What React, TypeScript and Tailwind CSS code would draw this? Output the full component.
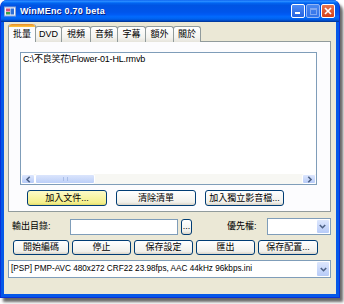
import React from "react";

const font = "font-['Liberation_Sans','Noto_Sans_CJK_TC',sans-serif]";

const Btn = ({ w, h = "h-[16px]", yellow, children }: { w: string; h?: string; yellow?: boolean; children: React.ReactNode }) => (
  <div
    className={`${w} ${h} shrink-0 rounded-[3px] border border-[#003c74] flex items-center justify-center text-[9px] text-black leading-none ${
      yellow
        ? "bg-[linear-gradient(#fcfbc8,#f4ef8a_85%,#e0d96c)]"
        : "bg-[linear-gradient(#ffffff,#f1f0eb_80%,#d9d3c7)]"
    }`}
  >
    {children}
  </div>
);

const Arrow = ({ dir = "down" }: { dir?: "down" | "left" | "right" }) => (
  <div className="w-[14px] h-full shrink-0 border border-white rounded-[2px] bg-[linear-gradient(#dde7fd,#b7cbf8)] flex items-center justify-center">
    <svg width="7" height="7" viewBox="0 0 7 7">
      {dir === "down" && <path d="M0.8 2 L3.5 4.7 L6.2 2" stroke="#4d6185" strokeWidth="1.6" fill="none" />}
      {dir === "left" && <path d="M4.7 0.8 L2 3.5 L4.7 6.2" stroke="#4d6185" strokeWidth="1.6" fill="none" />}
      {dir === "right" && <path d="M2.3 0.8 L5 3.5 L2.3 6.2" stroke="#4d6185" strokeWidth="1.6" fill="none" />}
    </svg>
  </div>
);

const tabs = [
  { label: "DVD", w: "w-[27px]" },
  { label: "視頻", w: "w-[30px]" },
  { label: "音頻", w: "w-[28px]" },
  { label: "字幕", w: "w-[29px]" },
  { label: "額外", w: "w-[29px]" },
  { label: "關於", w: "w-[28px]" },
];

const App = () => {
  return (
    <div className={`w-[344px] h-[304px] bg-white ${font}`}>
      <div className="w-[340px] h-[298px] flex flex-col rounded-t-[7px] bg-[#0558e8] border-x border-b border-[#0831d9] shadow-[3px_4px_3px_rgba(0,0,0,0.6)] overflow-hidden">
        {/* title bar */}
        <div className="h-[22px] shrink-0 flex items-center pl-[3px] pr-[4px] bg-[linear-gradient(#0058ee_0%,#3593ff_5%,#127dff_9%,#0262ee_15%,#0054e3_25%,#0055eb_55%,#005bf5_66%,#026afe_76%,#0062ef_86%,#0052d6_92%,#0040ab_96%,#003092_100%)]">
          <svg width="12" height="11" viewBox="0 0 12 11" className="shrink-0">
            <rect x="0.5" y="1" width="11" height="9" fill="#f4f6fb" stroke="#8aa4d6" />
            <rect x="2" y="2.5" width="4" height="3" fill="#d8507a" />
            <rect x="6.5" y="2.5" width="3.5" height="6" fill="#2e6fd8" />
            <rect x="2" y="6" width="4" height="2.5" fill="#3aa04a" />
          </svg>
          <span className="ml-[4px] text-[9px] font-bold text-white leading-none tracking-[0.2px] [text-shadow:1px_1px_0_#0a1e78]">
            WinMEnc 0.70 beta
          </span>
          <div className="ml-auto flex gap-[1px]">
            <div className="w-[14px] h-[14px] rounded-[2px] border border-white bg-[linear-gradient(#4c8bf5,#2663e0)] flex items-end pl-[3px] pb-[3px]">
              <div className="w-[5px] h-[2px] bg-white" />
            </div>
            <div className="w-[14px] h-[14px] rounded-[2px] border border-[#b7cdf8] bg-[linear-gradient(#5b95f3,#3f78e6)] flex items-center justify-center opacity-80">
              <div className="w-[7px] h-[7px] border border-[#9fbcf3] border-t-2" />
            </div>
            <div className="w-[14px] h-[14px] rounded-[2px] border border-white bg-[linear-gradient(#e9754f,#d2401c)] flex items-center justify-center">
              <svg width="8" height="8" viewBox="0 0 8 8">
                <path d="M1 1 L7 7 M7 1 L1 7" stroke="white" strokeWidth="1.7" />
              </svg>
            </div>
          </div>
        </div>

        {/* body */}
        <div className="flex-1 mx-[3px] mb-[3px] bg-[#ebe8d6] flex flex-col px-[4px] pt-[2px]">
          {/* tabs */}
          <div className="h-[18px] flex items-end relative z-10 -mb-[1px]">
            <div className="w-[28px] h-[18px] bg-[#fcfcfe] border-x border-[#919b9c] rounded-t-[3px] flex flex-col">
              <div className="h-[3px] rounded-t-[3px] bg-[linear-gradient(#e68b2c,#ffc73c)]" />
              <div className="flex-1 flex items-center justify-center text-[9px] leading-none">批量</div>
            </div>
            {tabs.map((t) => (
              <div
                key={t.label}
                className={`${t.w} h-[16px] -ml-[1px] first:ml-0 border border-b-0 border-[#919b9c] rounded-t-[3px] bg-[linear-gradient(#ffffff,#f3f3ef_70%,#e6e4dc)] flex items-center justify-center text-[9px] leading-none`}
              >
                {t.label}
              </div>
            ))}
          </div>

          {/* panel */}
          <div className="h-[171px] w-[323px] border border-[#919b9c] bg-[#fcfcfe] flex flex-col pl-[11px] pt-[10px]">
            <div className="w-[297px] h-[133px] border border-[#7f9db9] bg-white flex flex-col">
              <div className="flex-1 pl-[2px] pt-[1px] text-[9px] leading-[11px] tracking-[-0.2px]">C:\不良笑花\Flower-01-HL.rmvb</div>
              <div className="h-[10px] flex bg-[#f7f7f3] p-0">
                <Arrow dir="left" />
                <div className="w-[60px] h-full border border-white rounded-[2px] bg-[linear-gradient(#dbe5fc,#bccff8)] flex items-center justify-center">
                  <div className="w-[5px] h-[4px] border-x border-[#a8bde8]" />
                </div>
                <div className="flex-1" />
                <Arrow dir="right" />
              </div>
            </div>
            <div className="mt-[5px] flex pl-[7px] gap-[9px]">
              <Btn w="w-[80px]" yellow>加入文件...</Btn>
              <Btn w="w-[80px]">清除清單</Btn>
              <Btn w="w-[79px]">加入獨立影音檔...</Btn>
            </div>
          </div>

          {/* output row */}
          <div className="mt-[6px] h-[17px] flex items-center">
            <span className="ml-[4px] w-[58px] text-[9px] leading-none">輸出目錄:</span>
            <div className="w-[108px] h-[16px] border border-[#7f9db9] bg-white" />
            <div className="ml-[3px]">
              <Btn w="w-[11px]">...</Btn>
            </div>
            <span className="ml-[35px] text-[9px] leading-none">優先權:</span>
            <div className="ml-[10px] w-[64px] h-[17px] border border-[#7f9db9] bg-white flex justify-end p-0">
              <Arrow />
            </div>
          </div>

          {/* action buttons */}
          <div className="mt-[5px] flex pl-[5px] gap-[3px]">
            <Btn w="w-[56px]" h="h-[15px]">開始編碼</Btn>
            <Btn w="w-[59px]" h="h-[15px]">停止</Btn>
            <Btn w="w-[59px]" h="h-[15px]">保存設定</Btn>
            <Btn w="w-[59px]" h="h-[15px]">匯出</Btn>
            <Btn w="w-[60px]" h="h-[15px]">保存配置...</Btn>
          </div>

          {/* preset combo */}
          <div className="mt-[5px] w-[323px] h-[18px] border border-[#7f9db9] bg-white flex items-center">
            <span className="flex-1 pl-[2px] text-[8.2px] leading-none whitespace-nowrap">
              [PSP] PMP-AVC 480x272 CRF22 23.98fps, AAC 44kHz 96kbps.ini
            </span>
            <Arrow />
          </div>
        </div>
      </div>
    </div>
  );
};

export default App;
